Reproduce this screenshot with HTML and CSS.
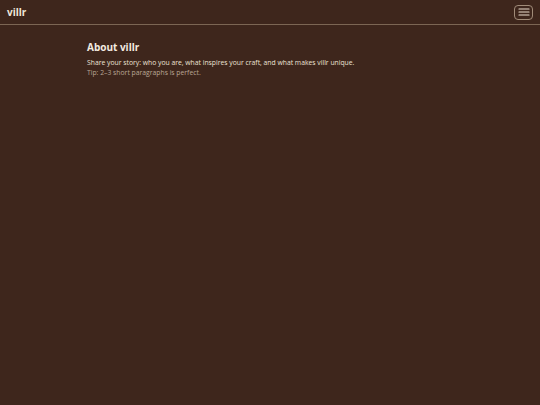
FILE: index.html
```html
<!DOCTYPE html>
<html>
<head>
<meta charset="utf-8">
<link rel="stylesheet" href="styles.css">
</head>
<body>
<header class="topbar">
  <span class="brand">villr</span>
  <button class="menu-btn" aria-label="Menu">
    <svg width="12" height="8" viewBox="0 0 12 8"><path d="M1 1h10M1 4h10M1 7h10" stroke="#e9dccb" stroke-width="1.2" stroke-linecap="round"/></svg>
  </button>
</header>
<main class="content">
  <h1 class="title">About villr</h1>
  <p class="lead">Share your story: who you are, what inspires your craft, and what makes villr unique.</p>
  <p class="tip">Tip: 2–3 short paragraphs is perfect.</p>
</main>
</body>
</html>
```
FILE: styles.css
```css
html, body {
  margin: 0;
  padding: 0;
  background: #3e261c;
  font-family: "Open Sans", "Noto Sans", sans-serif;
  color: #efe6da;
  height: 100%;
}
.topbar {
  height: 24px;
  display: flex;
  align-items: center;
  justify-content: space-between;
  padding: 0 7px;
  border-bottom: 1px solid #7c6654;
}
.brand {
  font-weight: 700;
  font-size: 10px;
  color: #efe6da;
}
.menu-btn {
  width: 19px;
  height: 15px;
  border: 1px solid #a08b78;
  border-radius: 4px;
  background: transparent;
  padding: 0;
  display: flex;
  align-items: center;
  justify-content: center;
}
.content {
  padding: 15px 87px;
}
.title {
  margin: 0 0 4px;
  font-size: 10px;
  line-height: 14px;
  font-weight: 700;
  color: #f3ebe0;
}
.lead {
  margin: 0;
  font-size: 6.8px;
  line-height: 10px;
  color: #ece2d5;
}
.tip {
  margin: 0;
  font-size: 6.8px;
  line-height: 10px;
  color: #b9a795;
}
```
